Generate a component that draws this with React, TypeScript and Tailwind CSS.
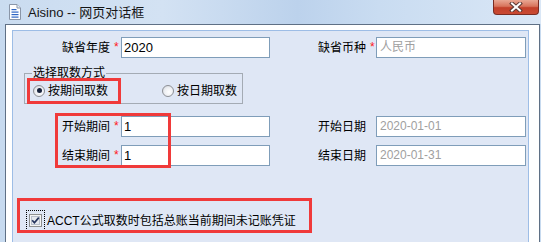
import React from "react";

function DocIcon() {
  return (
    <svg width="14" height="16" viewBox="0 0 14 16" className="shrink-0">
      <path d="M1.5 0.5 H9 L12.5 4 V15.5 H1.5 Z" fill="#ffffff" stroke="#8a96a8" />
      <path d="M9 0.5 V4 H12.5" fill="#e8eef6" stroke="#8a96a8" />
      <rect x="3.5" y="5" width="5" height="1.2" fill="#2f66c4" />
      <rect x="3.5" y="7.5" width="7" height="1.2" fill="#2f66c4" />
      <rect x="3.5" y="10" width="7" height="1.2" fill="#2f66c4" />
      <rect x="3.5" y="12.5" width="7" height="1.2" fill="#2f66c4" />
    </svg>
  );
}

function CloseBtn() {
  return (
    <div className="absolute right-[2px] top-0 w-[46px] h-[15px] rounded-b-[4px] border border-t-0 border-[#7a2c22] bg-[linear-gradient(180deg,#e9a793_0%,#d8745c_45%,#c3402a_55%,#c94a33_100%)] flex items-center justify-center">
      <svg width="14" height="10" viewBox="0 0 14 10">
        <path d="M3 1.5 L11 8.5 M11 1.5 L3 8.5" stroke="#5b3a35" strokeWidth="4" strokeLinecap="square" />
        <path d="M3 1.5 L11 8.5 M11 1.5 L3 8.5" stroke="#ffffff" strokeWidth="2" strokeLinecap="square" />
      </svg>
    </div>
  );
}

function Star({ show, w }: { show: boolean; w: string }) {
  return (
    <span className={`${w} shrink-0 pl-[4px] text-[12px] leading-[14px] text-[#ff1a1a] self-start pt-[3px]`}>
      {show ? "*" : ""}
    </span>
  );
}

function Input({ value, gray, w }: { value: string; gray?: boolean; w: string }) {
  return (
    <div
      className={`${w} h-[21px] shrink-0 border border-[#7f9db9] bg-white flex items-center ${
        gray ? "pl-[3px] text-[12px] text-[#a0a0a0]" : "pl-[2px] text-[13px] text-black"
      } leading-[15px]`}
    >
      {value}
    </div>
  );
}

function Radio({ checked, label }: { checked: boolean; label: string }) {
  return (
    <div className="flex items-center">
      <span className="w-[12px] h-[12px] rounded-full border border-[#8d9095] bg-[radial-gradient(circle_at_60%_60%,#ffffff_0%,#eef0f3_50%,#c9ced6_100%)] flex items-center justify-center shrink-0">
        {checked && <span className="w-[5px] h-[5px] rounded-full bg-[#17233d]" />}
      </span>
      <span className="ml-[3px] text-[12px] leading-[14px]">{label}</span>
    </div>
  );
}

function Check() {
  return (
    <svg width="13" height="13" viewBox="0 0 13 13" className="shrink-0">
      <rect x="0.5" y="0.5" width="12" height="12" fill="#f4f4f4" stroke="#8e8f8f" />
      <rect x="2.5" y="2.5" width="8" height="8" fill="#e6e9ee" stroke="#b8bfcb" />
      <path d="M3.2 6.3 L5.4 8.8 L9.8 3.6" fill="none" stroke="#24335c" strokeWidth="1.7" />
    </svg>
  );
}

export default function App() {
  return (
    <div className="relative w-[541px] h-[242px] overflow-hidden bg-[#c7daef] font-['Liberation_Sans','Noto_Sans_CJK_SC',sans-serif] text-[12px] text-black">
      <div className="relative h-[24px] flex items-center pl-[8px] bg-[linear-gradient(90deg,#cadcf0_0%,#d3e2f3_30%,#bcd2ec_55%,#c9dcf1_70%,#dae7f6_100%)]">
        <DocIcon />
        <span className="ml-[6px] text-[13px] leading-[15px] text-[#151515]">Aisino -- 网页对话框</span>
        <CloseBtn />
      </div>
      <div className="ml-[5px] mr-[1px] h-[260px] border-l border-t border-r border-[#5f7085] bg-white pt-[5px] pl-[6px] pr-[10px]">
        <div className="relative h-[260px] border border-[#9dbde6] bg-[#dfe7f5] pt-[6px]">
          {/* row 1 */}
          <div className="flex">
            <div className="flex items-center">
              <span className="w-[97px] text-right leading-[14px]">缺省年度</span>
              <Star show w="w-[11px]" />
              <Input value="2020" w="w-[149px]" />
            </div>
            <div className="ml-[9px] flex items-center">
              <span className="w-[87px] text-right leading-[14px]">缺省币种</span>
              <Star show w="w-[10px]" />
              <Input value="人民币" gray w="w-[150px]" />
            </div>
          </div>
          {/* group box */}
          <div className="relative ml-[11px] mt-[15px] w-[219px] h-[31px] border border-[#a4abb4] flex items-center pl-[8px] pt-[4px]">
            <span className="absolute left-[7px] -top-[8px] px-[1px] bg-[#dfe7f5] leading-[14px]">选择取数方式</span>
            <div className="w-[129px]">
              <Radio checked label="按期间取数" />
            </div>
            <Radio checked={false} label="按日期取数" />
          </div>
          {/* row 3 */}
          <div className="flex mt-[12px]">
            <div className="flex items-center">
              <span className="w-[97px] text-right leading-[14px]">开始期间</span>
              <Star show w="w-[11px]" />
              <Input value="1" w="w-[149px]" />
            </div>
            <div className="ml-[9px] flex items-center">
              <span className="w-[87px] text-right leading-[14px]">开始日期</span>
              <Star show={false} w="w-[10px]" />
              <Input value="2020-01-01" gray w="w-[150px]" />
            </div>
          </div>
          {/* row 4 */}
          <div className="flex mt-[8px]">
            <div className="flex items-center">
              <span className="w-[97px] text-right leading-[14px]">结束期间</span>
              <Star show w="w-[11px]" />
              <Input value="1" w="w-[149px]" />
            </div>
            <div className="ml-[9px] flex items-center">
              <span className="w-[87px] text-right leading-[14px]">结束日期</span>
              <Star show={false} w="w-[10px]" />
              <Input value="2020-01-31" gray w="w-[150px]" />
            </div>
          </div>
          {/* checkbox row */}
          <div className="flex items-center mt-[44px] ml-[13px]">
            <span className="border border-dotted border-black px-[2px] py-[3px] flex">
              <Check />
            </span>
            <span className="ml-[2px] leading-[14px]">ACCT公式取数时包括总账当前期间未记账凭证</span>
          </div>

          {/* red annotation boxes */}
          <div className="absolute left-[14px] top-[47px] w-[94px] h-[26px] border-[3px] border-[#f03a3a]" />
          <div className="absolute left-[42px] top-[82px] w-[116px] h-[55px] border-[3px] border-[#f03a3a]" />
          <div className="absolute left-[4px] top-[167px] w-[295px] h-[35px] border-[3px] border-[#f03a3a]" />
        </div>
      </div>
    </div>
  );
}
